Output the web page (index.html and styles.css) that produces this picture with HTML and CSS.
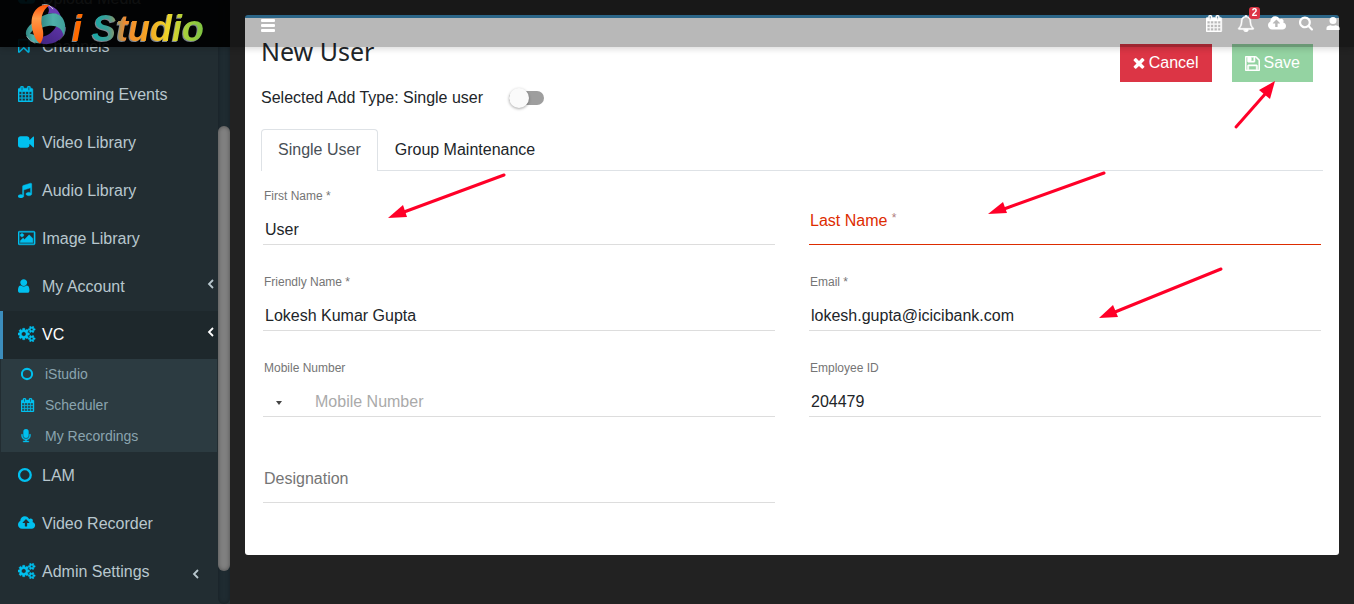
FILE: index.html
```html
<!DOCTYPE html>
<html lang="en">
<head>
  <meta charset="UTF-8">
  <meta name="viewport" content="width=device-width, initial-scale=1.0">
  <title>iStudio - New User</title>
  <link rel="stylesheet" href="styles.css">
</head>
<body>
  <!-- Icon set -->
  <svg class="sprite" aria-hidden="true">
    <symbol id="i-calendar" viewBox="64 0 1792 1792" preserveAspectRatio="xMinYMid"><path d="M192 1664h288v-288h-288v288zm352 0h320v-288h-320v288zm-352-352h288v-320h-288v320zm352 0h320v-320h-320v320zm-352-384h288v-288h-288v288zm736 736h320v-288h-320v288zm-384-736h320v-288h-320v288zm768 736h288v-288h-288v288zm-384-352h320v-320h-320v320zm-352-864v-288q0-13-9.5-22.5t-22.5-9.5h-64q-13 0-22.5 9.5t-9.5 22.5v288q0 13 9.5 22.5t22.5 9.5h64q13 0 22.5-9.5t9.5-22.5zm736 864h288v-320h-288v320zm-384-384h320v-288h-320v288zm384 0h288v-288h-288v288zm32-480v-288q0-13-9.5-22.5t-22.5-9.5h-64q-13 0-22.5 9.5t-9.5 22.5v288q0 13 9.5 22.5t22.5 9.5h64q13 0 22.5-9.5t9.5-22.5zm384-64v1280q0 52-38 90t-90 38h-1408q-52 0-90-38t-38-90v-1280q0-52 38-90t90-38h128v-96q0-66 47-113t113-47h64q66 0 113 47t47 113v96h384v-96q0-66 47-113t113-47h64q66 0 113 47t47 113v96h128q52 0 90 38t38 90z"/></symbol>
    <symbol id="i-cloud" viewBox="0 0 1920 1792" preserveAspectRatio="xMinYMid"><path d="M1280 864q0-14-9-23l-352-352q-9-9-23-9t-23 9l-351 351q-10 12-10 24 0 14 9 23t23 9h224v352q0 13 9.5 22.5t22.5 9.5h192q13 0 22.5-9.5t9.5-22.5v-352h224q13 0 22.5-9.5t9.5-22.5zm640 288q0 159-112.5 271.5t-271.5 112.5h-1088q-185 0-316.5-131.5t-131.5-316.5q0-130 70-240t188-165q-2-30-2-43 0-212 150-362t362-150q156 0 285.5 87t188.5 231q71-62 166-62 106 0 181 75t75 181q0 76-41 138 130 31 213.5 135.5t83.5 238.5z"/></symbol>
    <symbol id="i-video" viewBox="0 0 1792 1792" preserveAspectRatio="xMinYMid"><path d="M1792 352v1088q0 42-39 59-13 5-25 5-27 0-45-19l-403-403v166q0 119-84.5 203.5t-203.5 84.5h-704q-119 0-203.5-84.5t-84.5-203.5v-704q0-119 84.5-203.5t203.5-84.5h704q119 0 203.5 84.5t84.5 203.5v165l403-402q18-19 45-19 12 0 25 5 39 17 39 59z"/></symbol>
    <symbol id="i-music" viewBox="128 0 1792 1792" preserveAspectRatio="xMinYMid"><path d="M1664 224v1120q0 50-34 89t-86 60.5-103.5 32-96.5 10.5-96.5-10.5-103.5-32-86-60.5-34-89 34-89 86-60.5 103.5-32 96.5-10.5q105 0 192 39v-537l-768 237v709q0 50-34 89t-86 60.5-103.5 32-96.5 10.5-96.5-10.5-103.5-32-86-60.5-34-89 34-89 86-60.5 103.5-32 96.5-10.5q105 0 192 39v-967q0-31 19-56.5t49-35.5l832-256q12-4 28-4 40 0 68 28t28 68z"/></symbol>
    <symbol id="i-image" viewBox="-64 0 1920 1792" preserveAspectRatio="xMinYMid"><path d="M576 576q0 80-56 136t-136 56-136-56-56-136 56-136 136-56 136 56 56 136zm1024 384v448h-1408v-192l320-320 160 160 512-512zm96-704h-1600q-13 0-22.5 9.5t-9.5 22.5v1216q0 13 9.5 22.5t22.5 9.5h1600q13 0 22.5-9.5t9.5-22.5v-1216q0-13-9.5-22.5t-22.5-9.5zm160 32v1216q0 66-47 113t-113 47h-1600q-66 0-113-47t-47-113v-1216q0-66 47-113t113-47h1600q66 0 113 47t47 113z"/></symbol>
    <symbol id="i-user" viewBox="256 0 1792 1792" preserveAspectRatio="xMinYMid"><path d="M1536 1399q0 109-62.5 187t-150.5 78h-854q-88 0-150.5-78t-62.5-187q0-85 8.5-160.5t31.5-152 58.5-131 94-89 134.5-34.5q131 128 313 128t313-128q76 0 134.5 34.5t94 89 58.5 131 31.5 152 8.5 160.5zm-256-887q0 159-112.5 271.5t-271.5 112.5-271.5-112.5-112.5-271.5 112.5-271.5 271.5-112.5 271.5 112.5 112.5 271.5z"/></symbol>
    <symbol id="i-bookmark" viewBox="256 0 1792 1792" preserveAspectRatio="xMinYMid"><path d="M1408 256h-1024v1242l423-406 89-85 89 85 423 406v-1242zm12-128q23 0 44 9 33 13 52.5 41t19.5 62v1289q0 34-19.5 62t-52.5 41q-19 8-44 8-48 0-83-32l-441-424-441 424q-36 33-83 33-23 0-44-9-33-13-52.5-41t-19.5-62v-1289q0-34 19.5-62t52.5-41q21-9 44-9h1048z"/></symbol>
    <symbol id="i-mic" viewBox="256 0 1792 1792" preserveAspectRatio="xMinYMid"><path d="M1472 704v128q0 221-147.5 384.5t-364.5 187.5v132h256q26 0 45 19t19 45-19 45-45 19h-640q-26 0-45-19t-19-45 19-45 45-19h256v-132q-217-24-364.5-187.5t-147.5-384.5v-128q0-26 19-45t45-19 45 19 19 45v128q0 185 131.5 316.5t316.5 131.5 316.5-131.5 131.5-316.5v-128q0-26 19-45t45-19 45 19 19 45zm-256-384v512q0 132-94 226t-226 94-226-94-94-226v-512q0-132 94-226t226-94 226 94 94 226z"/></symbol>
    <symbol id="i-circle" viewBox="128 0 1792 1792" preserveAspectRatio="xMinYMid"><circle cx="896" cy="896" r="656" fill="none" stroke="currentColor" stroke-width="260"/></symbol>
    <symbol id="i-cogs" viewBox="-64 0 1920 1792" preserveAspectRatio="xMinYMid">
      <path d="M832 896q0-106-75-181t-181-75-181 75-75 181 75 181 181 75 181-75 75-181zm384-91v185q0 10-7 19.5t-16 10.5l-155 24q-11 35-32 76 34 48 90 115 7 11 7 20 0 12-7 19-23 30-82.5 89.5t-78.5 59.5q-11 0-21-7l-115-90q-37 19-77 31-11 108-23 155-7 24-30 24h-186q-11 0-20-7.5t-10-17.5l-23-153q-34-10-75-31l-118 89q-7 7-20 7-11 0-21-8-144-133-144-160 0-9 7-19 10-14 41-53t47-61q-23-44-35-82l-152-24q-10-1-17-9.5t-7-19.5v-185q0-10 7-19.5t16-10.5l155-24q11-35 32-76-34-48-90-115-7-11-7-20 0-12 7-20 22-30 82-89t79-59q11 0 21 7l115 90q34-18 77-32 11-108 23-154 7-24 30-24h186q11 0 20 7.5t10 17.5l23 153q34 10 75 31l118-89q8-7 20-7 11 0 21 8 144 133 144 160 0 8-7 19-12 16-42 54t-45 60q23 48 34 82l152 23q10 2 17 10.5t7 19.5z"/>
      <g id="cog-small"><path fill-rule="evenodd" d="M1600 1408q0-52-38-90t-90-38-90 38-38 90q0 53 37.500 90.500t90.500 37.500 90.500-37.500 37.500-90.500zM1856 1338v140q0 16-149 31-12 27-30 52 51 113 51 138 0 4-4 7-122 71-124 71-8 0-46-47t-52-68q-20 2-30 2t-30-2q-14 21-52 68t-46 47q-2 0-124-71-4-3-4-7 0-25 51-138-18-25-30-52-149-15-149-31v-140q0-16 149-31 13-29 30-52-51-113-51-138 0-4 4-7 4-2 35-20t59-34 30-16q8 0 46 46.500t52 67.500q20-2 30-2t30 2q51-71 92-112l6-2q4 0 124 70 4 3 4 7 0 25-51 138 17 23 30 52 149 15 149 31z"/></g>
      <use href="#cog-small" y="-1024"/>
    </symbol>
    <symbol id="i-bell" viewBox="0 0 1792 1792"><path d="M912 1696q0-16-16-16-59 0-101.5-42.5t-42.5-101.5q0-16-16-16t-16 16q0 73 51.5 124.5t124.5 51.5q16 0 16-16zm-666-288h1300q-266-300-266-832 0-51-24-105t-69-103-121.5-80.500-169.500-31.500-169.500 31.500-121.500 80.500-69 103-24 105q0 532-266 832zm1482 0q0 52-38 90t-90 38h-448q0 106-75 181t-181 75-181-75-75-181h-448q-52 0-90-38t-38-90q50-42 91-88t85-119.500 74.500-158.500 50-206 19.500-260q0-152 117-282.500t307-158.500q-8-19-8-39 0-40 28-68t68-28 68 28 28 68q0 20-8 39 190 28 307 158.500t117 282.500q0 139 19.500 260t50 206 74.500 158.500 85 119.500 91 88z"/></symbol>
    <symbol id="i-search" viewBox="64 128 1664 1664"><path d="M1216 832q0-185-131.500-316.500t-316.500-131.500-316.500 131.500-131.500 316.500 131.500 316.500 316.500 131.500 316.500-131.500 131.500-316.500zm512 832q0 52-38 90t-90 38q-54 0-90-38l-343-342q-179 124-399 124-143 0-273.500-55.500t-225-150-150-225-55.500-273.500 55.500-273.500 150-225 225-150 273.500-55.500 273.500 55.500 225 150 150 225 55.500 273.500q0 220-124 399l343 343q37 37 37 90z"/></symbol>
    <symbol id="i-person" viewBox="0 0 14 14"><circle cx="7" cy="4" r="3.500"/><path d="M.5 13.500v-2C.5 9.800 3 9 4.700 8.800Q7 9.800 9.300 8.800C11 9 13.500 9.800 13.500 11.500v2z"/></symbol>
    <symbol id="i-times" viewBox="240 256 1312 1312"><path d="M1490 1322q0 40-28 68l-136 136q-28 28-68 28t-68-28l-294-294-294 294q-28 28-68 28t-68-28l-136-136q-28-28-28-68t28-68l294-294-294-294q-28-28-28-68t28-68l136-136q28-28 68-28t68 28l294 294 294-294q28-28 68-28t68 28l136 136q28 28 28 68t-28 68l-294 294 294 294q28 28 28 68z"/></symbol>
    <symbol id="i-save" viewBox="128 128 1536 1536"><path d="M512 1536h768v-384h-768v384zm896 0h128v-896q0-14-10-38.500t-20-34.500l-281-281q-10-10-34-20t-39-10v416q0 40-28 68t-68 28h-576q-40 0-68-28t-28-68v-416h-128v1280h128v-416q0-40 28-68t68-28h832q40 0 68 28t28 68v416zm-384-928v-320q0-13-9.500-22.500t-22.500-9.500h-192q-13 0-22.500 9.500t-9.500 22.500v320q0 13 9.500 22.500t22.500 9.500h192q13 0 22.500-9.500t9.500-22.500zm640 32v928q0 40-28 68t-68 28h-1344q-40 0-68-28t-28-68v-1344q0-40 28-68t68-28h928q40 0 88 20t76 48l280 280q28 28 48 76t20 88z"/></symbol>
    <symbol id="i-angle" viewBox="0 0 7 12"><path d="M6 2 2 6 6 10" fill="none" stroke="currentColor" stroke-width="1.800"/></symbol>
  </svg>

  <header class="topbar">
    <a class="brand" href="#" aria-label="i Studio">
      <svg class="brand-mark" viewBox="15 8 124 126">
        <defs>
          <linearGradient id="orange" x1="0" y1="0" x2="0" y2="1"><stop offset="0" stop-color="#ff5208"/><stop offset=".35" stop-color="#ff9a48"/><stop offset="1" stop-color="#ff5a0a"/></linearGradient>
          <linearGradient id="teal" x1="0" y1="0" x2="1" y2="0"><stop offset="0" stop-color="#2f8783"/><stop offset=".5" stop-color="#4fb0aa"/><stop offset="1" stop-color="#3f9f9b"/></linearGradient>
          <linearGradient id="violet" x1="0" y1="1" x2="1" y2="0"><stop offset="0" stop-color="#40247e"/><stop offset="1" stop-color="#6236ac"/></linearGradient>
        </defs>
        <path d="M78 14C100 14 118 28 123 48C112 40 100 38 84 40C90 30 88 20 78 14z" fill="#6b3fb5"/>
        <path d="M66 14Q88 8 100 26" fill="none" stroke="#d8d0d0" stroke-width="3"/>
        <path d="M37 68C22 80 14 94 19 106C26 122 44 130 62 130C48 116 40 96 37 68z" fill="url(#teal)"/>
        <path d="M20 108Q28 124 46 129" fill="none" stroke="#cfd6d6" stroke-width="2"/>
        <path d="M30 100 42 86 48 106z" fill="#101614"/>
        <path d="M138 82C128 70 116 72 108 80C100 94 86 106 66 110C64 118 60 124 56 128C72 134 98 134 114 122C130 110 138 98 138 82z" fill="url(#violet)"/>
        <path d="M62 50C88 34 116 34 128 52C138 66 140 88 132 108C128 82 106 68 66 82z" fill="url(#teal)"/>
        <path d="M137 80Q138 106 118 120" fill="none" stroke="#6a6a80" stroke-width="2"/>
        <path d="M88 14C50 8 30 42 36 80C40 104 48 122 61 130C72 116 72 98 67 80C61 56 66 30 88 14z" fill="url(#orange)"/>
      </svg>
      <span class="brand-text"><span class="brand-i">i</span> <span class="brand-name">Studio</span></span>
    </a>
    <div class="topbar-main">
      <button class="bar-btn menu-btn" aria-label="Toggle menu"><span></span><span></span><span></span></button>
      <nav class="bar-actions">
        <button class="bar-btn" aria-label="Calendar"><svg class="heavy"><use href="#i-calendar"/></svg></button>
        <button class="bar-btn" aria-label="Notifications"><svg class="heavy"><use href="#i-bell"/></svg><span class="badge">2</span></button>
        <button class="bar-btn" aria-label="Upload"><svg><use href="#i-cloud"/></svg></button>
        <button class="bar-btn small" aria-label="Search"><svg><use href="#i-search"/></svg></button>
        <button class="bar-btn small" aria-label="Profile"><svg><use href="#i-person"/></svg></button>
      </nav>
    </div>
  </header>

  <div class="layout">
    <aside class="sidebar">
      <ul class="menu">
        <li><a href="#"><svg><use href="#i-cloud"/></svg>Upload Media</a></li>
        <li><a href="#"><svg class="heavy"><use href="#i-bookmark"/></svg>Channels</a></li>
        <li><a href="#"><svg class="heavy"><use href="#i-calendar"/></svg>Upcoming Events</a></li>
        <li><a href="#"><svg><use href="#i-video"/></svg>Video Library</a></li>
        <li><a href="#"><svg class="heavy"><use href="#i-music"/></svg>Audio Library</a></li>
        <li><a href="#"><svg class="heavy"><use href="#i-image"/></svg>Image Library</a></li>
        <li><a href="#"><svg><use href="#i-user"/></svg>My Account<svg class="angle"><use href="#i-angle"/></svg></a></li>
        <li class="active">
          <a href="#"><svg class="heavy"><use href="#i-cogs"/></svg>VC<svg class="angle"><use href="#i-angle"/></svg></a>
          <ul class="submenu">
            <li><a href="#"><svg><use href="#i-circle"/></svg>iStudio</a></li>
            <li><a href="#"><svg class="heavy"><use href="#i-calendar"/></svg>Scheduler</a></li>
            <li><a href="#"><svg class="heavy"><use href="#i-mic"/></svg>My Recordings</a></li>
          </ul>
        </li>
        <li><a href="#"><svg><use href="#i-circle"/></svg>LAM</a></li>
        <li><a href="#"><svg><use href="#i-cloud"/></svg>Video Recorder</a></li>
        <li class="last"><a href="#"><svg class="heavy"><use href="#i-cogs"/></svg>Admin Settings<svg class="angle"><use href="#i-angle"/></svg></a></li>
      </ul>
      <div class="scroll-track"><div class="scroll-thumb"></div></div>
    </aside>

    <main class="content">
      <section class="panel">
        <div class="panel-head">
          <h1>New User</h1>
          <div class="panel-buttons">
            <button class="btn btn-cancel" type="button"><svg><use href="#i-times"/></svg>Cancel</button>
            <div class="annotated">
              <button class="btn btn-save" type="submit" form="user-form" disabled><svg class="heavy"><use href="#i-save"/></svg>Save</button>
              <svg class="arrow arrow-save" viewBox="0 0 42 48"><path d="M2 46 32 12"/><path class="tip" d="M41 0 36 18 25 9z"/></svg>
            </div>
          </div>
        </div>

        <div class="add-type">
          <label for="add-type">Selected Add Type: Single user</label>
          <input type="checkbox" id="add-type" class="toggle">
        </div>

        <div class="tabs" role="tablist">
          <button class="tab selected" role="tab" aria-selected="true">Single User</button>
          <button class="tab" role="tab" aria-selected="false">Group Maintenance</button>
        </div>

        <form id="user-form" class="user-form">
          <div class="field">
            <label for="first-name">First Name *</label>
            <input type="text" id="first-name" value="User">
            <svg class="arrow arrow-first" viewBox="0 0 118 46"><path d="M116 2 16 39"/><path class="tip" d="M0 45 15 32 19 44z"/></svg>
          </div>
          <div class="field empty invalid">
            <label for="last-name">Last Name <span class="star">*</span></label>
            <input type="text" id="last-name">
            <svg class="arrow arrow-last" viewBox="0 0 118 46"><path d="M116 2 16 38"/><path class="tip" d="M0 43 15 31 19 42z"/></svg>
          </div>
          <div class="field">
            <label for="friendly-name">Friendly Name *</label>
            <input type="text" id="friendly-name" value="Lokesh Kumar Gupta">
          </div>
          <div class="field">
            <label for="email">Email *</label>
            <input type="text" id="email" value="lokesh.gupta@icicibank.com">
            <svg class="arrow arrow-email" viewBox="0 0 124 52"><path d="M122 2 16 45"/><path class="tip" d="M0 51 14 38 19 50z"/></svg>
          </div>
          <div class="field">
            <label for="mobile">Mobile Number</label>
            <div class="phone">
              <select aria-label="Country code"><option></option></select>
              <svg class="caret" viewBox="0 0 6 4"><path d="M0 0h6L3 4z"/></svg>
              <input type="tel" id="mobile" placeholder="Mobile Number">
            </div>
          </div>
          <div class="field">
            <label for="employee-id">Employee ID</label>
            <input type="text" id="employee-id" value="204479">
          </div>
          <div class="field empty">
            <label for="designation">Designation</label>
            <input type="text" id="designation">
          </div>
        </form>
      </section>
    </main>
  </div>
</body>
</html>
```

FILE: styles.css
```css
* {
  box-sizing: border-box;
}
body {
  margin: 0;
  font-family: "Liberation Sans", Arial, sans-serif;
  font-size: 16px;
  line-height: 24px;
  color: #212529;
  background: #222;
}
button, input, select {
  font-family: inherit;
  font-size: 16px;
  border: none;
  padding: 0;
  margin: 0;
  background: none;
  color: inherit;
}
button {
  cursor: pointer;
}
a {
  text-decoration: none;
}
svg {
  fill: currentColor;
  flex-shrink: 0;
}
.heavy {
  stroke: currentColor;
  stroke-width: 50;
}
.sprite {
  position: absolute;
  width: 0;
  height: 0;
}

/* Top bar */
.topbar {
  position: fixed;
  top: 0;
  left: 0;
  right: 0;
  z-index: 10;
  display: flex;
  height: 47px;
  box-shadow: 0 2px 6px rgba(0, 0, 0, 0.15);
}
.brand {
  display: flex;
  align-items: center;
  gap: 6px;
  width: 230px;
  padding-left: 25px;
  background: rgba(0, 0, 0, 0.92);
}
.brand-mark {
  width: 41px;
  height: 42px;
}
.brand-text {
  margin-top: 10px;
  font-size: 36px;
  font-weight: bold;
  font-style: italic;
  line-height: 42px;
  white-space: nowrap;
  filter: drop-shadow(-1px 1px 0 #7d8790);
}
.brand-i {
  color: #ff6a00;
}
.brand-name {
  color: transparent;
  background: linear-gradient(90deg, #12a8a8 0%, #3f9f96 14%, #f28a2e 30%, #f5a623 50%, #ecd52a 68%, #a4cf3c 84%, #7cc242 100%);
  -webkit-background-clip: text;
  background-clip: text;
}
.topbar-main {
  flex: 1;
  display: flex;
  justify-content: space-between;
  align-items: flex-start;
  padding: 14px 14px 0 31px;
  background: rgba(0, 0, 0, 0.28);
}
.bar-actions {
  display: flex;
  gap: 13px;
}
.bar-btn {
  position: relative;
  width: 18px;
  height: 18px;
  color: #fff;
}
.bar-btn svg {
  display: block;
  width: 100%;
  height: 17px;
}
.bar-btn.small {
  width: 14px;
}
.menu-btn {
  display: flex;
  flex-direction: column;
  justify-content: flex-end;
  gap: 2px;
  width: 14px;
}
.menu-btn span {
  height: 3px;
  border-radius: 1px;
  background: #fff;
}
.badge {
  position: absolute;
  top: -7px;
  left: 12px;
  width: 11px;
  height: 12px;
  border-radius: 3px;
  background: #dc3545;
  font-size: 10px;
  font-weight: bold;
  line-height: 12px;
  text-align: center;
}

/* Sidebar */
.layout {
  display: flex;
}
.sidebar {
  position: sticky;
  top: 0;
  display: flex;
  width: 230px;
  height: 100vh;
  overflow: hidden;
  background: #222d32;
}
.menu {
  flex: 1;
  margin: -25px 0 0;
  padding: 0;
  list-style: none;
}
.menu a {
  display: flex;
  align-items: center;
  gap: 6px;
  height: 48px;
  padding: 0 4px 0 15px;
  border-left: 3px solid transparent;
  color: #b8c7ce;
}
.menu svg {
  width: 18px;
  height: 16px;
  margin-bottom: 2px;
  color: #00c0ef;
}
.menu .angle {
  width: 7px;
  height: 12px;
  margin: 0 0 6px auto;
  color: inherit;
}
.menu .last .angle {
  margin: 4px 15px 0 auto;
}
.menu .active > a {
  border-left-color: #3c8dbc;
  background: #1e282c;
  color: #fff;
}
.submenu {
  margin: 0 1px;
  padding: 0;
  list-style: none;
  background: #2c3b41;
}
.submenu li {
  padding-bottom: 1px;
}
.menu .submenu a {
  height: 30px;
  padding-left: 17px;
  font-size: 14px;
  color: #8aa4af;
}
.submenu svg {
  height: 14px;
  margin: 0;
}
.scroll-track {
  width: 12px;
  padding-top: 126px;
  border-radius: 6px;
  background: #1f2b31;
  box-shadow: inset 0 0 4px rgba(0, 0, 0, 0.3);
}
.scroll-thumb {
  height: 93%;
  border-radius: 6px;
  background: #808080;
  box-shadow: inset 0 0 4px rgba(0, 0, 0, 0.4);
}

/* Panel */
.content {
  flex: 1;
  padding: 15px;
}
.panel {
  padding: 18px 16px 52px;
  border-top: 3px solid #3c8dbc;
  border-radius: 3px;
  background: #fff;
}
.panel-head {
  display: flex;
  justify-content: space-between;
}
.panel-head h1 {
  margin: 0;
  font-family: "Noto Sans", sans-serif;
  font-size: 25px;
  font-weight: normal;
  line-height: 30px;
}
.panel-buttons {
  display: flex;
  gap: 20px;
  padding: 8px 10px 0 0;
}
.btn {
  display: flex;
  align-items: center;
  gap: 4px;
  height: 38px;
  padding: 0 13px;
  color: #fff;
}
.btn svg {
  width: 15px;
  height: 15px;
}
.btn-cancel {
  background: #dc3545;
}
.btn-cancel svg {
  width: 12px;
  height: 12px;
}
.btn-save {
  background: #94d3a2;
  cursor: default;
}
.add-type {
  display: flex;
  align-items: center;
  gap: 26px;
  height: 32px;
}
.toggle {
  appearance: none;
  position: relative;
  width: 35px;
  height: 14px;
  border-radius: 7px;
  background: #9e9e9e;
}
.toggle::before {
  content: "";
  position: absolute;
  top: -3px;
  left: 0;
  width: 20px;
  height: 20px;
  border-radius: 50%;
  background: #fafafa;
  box-shadow: 0 1px 3px rgba(0, 0, 0, 0.35);
}
.toggle:checked::before {
  left: 16px;
}
.tabs {
  display: flex;
  margin-top: 15px;
  box-shadow: inset 0 -1px 0 #dee2e6;
}
.tab {
  height: 42px;
  padding: 0 16px 2px;
  border: 1px solid transparent;
  border-bottom: none;
  border-radius: 4px 4px 0 0;
}
.tab.selected {
  border-color: #dee2e6;
  background: #fff;
  color: #495057;
}

/* Form */
.user-form {
  display: grid;
  grid-template-columns: 1fr 1fr;
  gap: 26px 34px;
  padding: 14px 2px 0;
}
.field {
  position: relative;
  display: flex;
  flex-direction: column;
  height: 60px;
  border-bottom: 1px solid #ddd;
}
.field label {
  padding-left: 1px;
  font-size: 12px;
  line-height: 22px;
  color: #757575;
}
.field input {
  flex: 1;
  min-width: 0;
  padding: 8px 2px 0;
  outline: none;
}
.field.empty label {
  position: absolute;
  top: 25px;
  left: 0;
  font-size: 16px;
}
.field.invalid {
  border-color: #dd2c00;
}
.field.invalid label {
  color: #dd2c00;
}
.field .star {
  font-size: 12px;
  line-height: 16px;
  vertical-align: top;
  color: #b08080;
}
.phone {
  position: relative;
  flex: 1;
  display: flex;
}
.phone select {
  appearance: none;
  width: 50px;
}
.phone input::placeholder {
  color: #aaa;
}
.caret {
  position: absolute;
  top: 22px;
  left: 13px;
  width: 6px;
  height: 4px;
  color: #444;
}

/* Pointers */
.annotated {
  position: relative;
}
.arrow {
  position: absolute;
  overflow: visible;
  pointer-events: none;
  fill: none;
  stroke: #ff0028;
  stroke-width: 3;
  stroke-linecap: round;
}
.arrow .tip {
  fill: #ff0028;
  stroke: none;
}
.arrow-save {
  top: 37px;
  left: 2px;
  width: 42px;
  height: 48px;
}
.arrow-first {
  top: -12px;
  left: 125px;
  width: 118px;
  height: 46px;
}
.arrow-last {
  top: -14px;
  left: 179px;
  width: 118px;
  height: 46px;
}
.arrow-email {
  top: -4px;
  left: 290px;
  width: 124px;
  height: 52px;
}
```
